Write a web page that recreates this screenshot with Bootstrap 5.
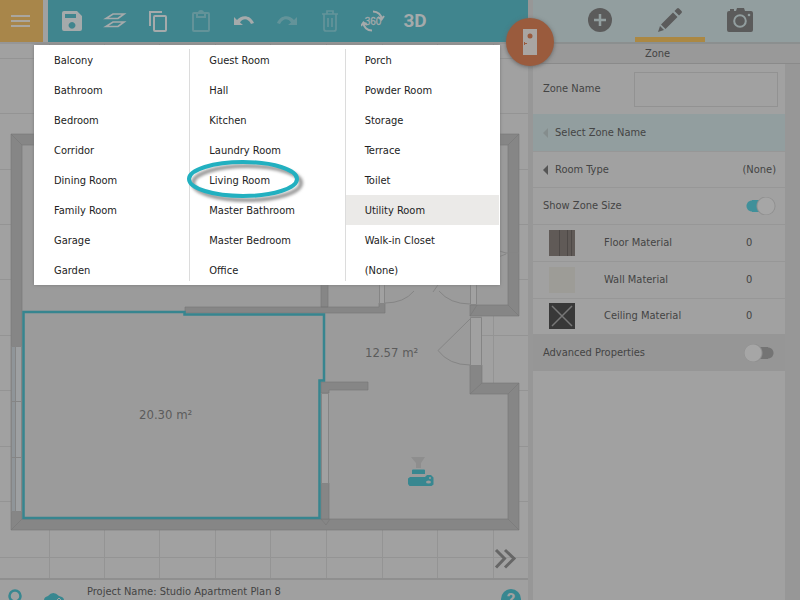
<!DOCTYPE html>
<html lang="en">
<head>
<meta charset="utf-8">
<meta name="viewport" content="width=device-width, initial-scale=1">
<title>Studio Apartment Plan 8</title>
<link href="https://cdn.jsdelivr.net/npm/bootstrap@5.3.0/dist/css/bootstrap.min.css" rel="stylesheet">
<style>
  body { font-family: "DejaVu Sans Condensed", "DejaVu Sans", sans-serif; font-stretch: condensed; font-size: 11px; line-height: 16px; color: #444; background: #a1a1a1; }
  button { font-family: inherit; color: inherit; }
  .plain-btn { border: 0; padding: 0; background: none; }
  .top-strip { height: 42px; }
  .menu-btn { width: 43px; background: #a8864a; }
  .menu-btn svg { margin-right: 3px; }
  .toolbar { background: #40858e; margin-left: 5px; padding-left: 2px; }
  .tool { width: 43px; flex: 0 1 43px; }
  .tool.faded { opacity: .3; }
  .workspace { flex: 0 0 66%; background: #a1a1a1; }
  .plan-area { border-top: 2px solid #969696; border-bottom: 2px solid #8f8f8f; min-height: 0; }
  .status { height: 20px; background: #a0a0a0; }
  .props { border-left: 5px solid #979797; background: #a1a1a1; }
  .tabs { background: #929e9f; border-bottom: 2px solid #8b8f8f; height: 44px; padding-left: 32px; padding-right: 22px; }
  .tab-btn { width: 70px; padding-top: 3px; border-bottom: 5px solid transparent; }
  .tab-btn.current { border-bottom-color: #ab8843; }
  .props-title { height: 20px; padding-top: 2px; background: #999; border-bottom: 1px solid #8a8a8a; padding-right: 18px; }
  .props-list { padding-right: 15px; background: #979797; }
  .props-rows { background: #a1a1a1; }
  .prop-group { height: 257px; }
  .prop { padding: 0 9px 0 10px; border-top: 1px solid #979797; }
  .prop.tall { height: 50px; border-top: 0; padding-right: 7px; }
  .prop.lit { background: #929e9f; border-color: #929e9f; }
  .prop.dark { background: #969696; border-color: #969696; }
  .zone-input { width: 144px; height: 35px; background: #a1a1a1; border: 1px solid #929292; }
  .arrow { width: 12px; }
  .swatch-cell { width: 61px; padding-left: 6px; }
  .count { width: 30px; }
  .toggle { appearance: none; width: 32px; height: 18px; margin: 0; background: radial-gradient(circle at 22px 9px, #a6a6a6 8px, #8f8f8f 9px, transparent 10px), radial-gradient(circle at 8px 9px, #40909a 5px, transparent 6px), linear-gradient(#40909a, #40909a) 8px 3px / 14px 12px no-repeat; border-radius: 9px; }
  .toggle:not(:checked) { background: radial-gradient(circle at 9px 9px, #a6a6a6 8px, #8f8f8f 9px, transparent 10px), radial-gradient(circle at 24px 9px, #747474 5px, transparent 6px), linear-gradient(#747474, #747474) 9px 3px / 15px 12px no-repeat; }
  .room-menu { top: 45px; left: 34px; width: 466px; background: #fff; color: #222; box-shadow: 0 0 3px #777; z-index: 2; }
  .room-col { position: relative; }
  .room-col + .room-col::before { content: ""; position: absolute; left: 0; top: 4px; bottom: 4px; border-left: 1px solid #dcdcdc; }
  .room-item { height: 30px; padding: 2px 0 0 20px; }
  .room-item.hovered { background: #ebeae8; margin-right: 1px; }
  .callout { left: 150px; top: 111px; pointer-events: none; }
  .room-badge { left: 506px; top: 18px; width: 48px; height: 48px; background: #9a5b3d; box-shadow: 0 1px 4px #666; z-index: 3; }
</style>
<script src="https://cdn.jsdelivr.net/npm/bootstrap@5.3.0/dist/js/bootstrap.bundle.min.js"></script>
</head>
<body>
<div class="d-flex vh-100 position-relative overflow-hidden">
  <main class="workspace d-flex flex-column">
    <div class="top-strip d-flex flex-shrink-0">
      <button class="plain-btn menu-btn" aria-label="Menu">
        <svg width="22" height="16" viewBox="0 0 22 16" stroke="#aaa69f" stroke-width="2.2"><path d="M2 3h19M2 8h19M2 13h19"/></svg>
      </button>
      <div class="toolbar d-flex flex-grow-1">
        <button class="plain-btn tool" aria-label="Save"><svg width="22" height="22" viewBox="0 0 22 22"><path fill="#a5aaab" fill-rule="evenodd" d="M3 1h13l5 5v13a2 2 0 0 1-2 2H3a2 2 0 0 1-2-2V3a2 2 0 0 1 2-2zM4 4v4h11V4zM11 12a3.4 3.4 0 1 0 .01 0z"/></svg></button>
        <button class="plain-btn tool" aria-label="Levels"><svg width="24" height="20" viewBox="0 0 24 20" fill="none" stroke="#a5aaab" stroke-width="1.7"><path d="M3 7.500 10 3h11l-6 4.500zM3 15.500 10 11h11l-6 4.500z"/></svg></button>
        <button class="plain-btn tool" aria-label="Copy"><svg width="22" height="24" viewBox="0 0 22 24" fill="none" stroke="#a5aaab" stroke-width="2"><path d="M3 17V3h12"/><rect x="7" y="7" width="12" height="15" rx="1"/></svg></button>
        <button class="plain-btn tool faded" aria-label="Paste"><svg width="20" height="24" viewBox="0 0 20 24" fill="none" stroke="#b5b5b5" stroke-width="2"><rect x="2" y="4" width="16" height="18" rx="1"/><path d="M6 4h8v4H6zM8 4a2 2 0 0 1 4 0"/></svg></button>
        <button class="plain-btn tool" aria-label="Undo"><svg width="24" height="16" viewBox="0 0 24 16"><path fill="#a5aaab" d="M2 4l3 3C9 2 18 1 22 10l-3 1C16 5 11 5 8 9.500l3 2.500H2z"/></svg></button>
        <button class="plain-btn tool faded" aria-label="Redo"><svg width="24" height="16" viewBox="0 0 24 16"><path fill="#b5b5b5" d="M22 4l-3 3C15 2 6 1 2 10l3 1C8 5 13 5 16 9.500L13 12h9z"/></svg></button>
        <button class="plain-btn tool faded" aria-label="Delete"><svg width="20" height="24" viewBox="0 0 20 24" fill="none" stroke="#b5b5b5" stroke-width="1.700"><path d="M2 5h16M7 5V2h6v3M4 5v15a2 2 0 0 0 2 2h8a2 2 0 0 0 2-2V5M8 9v9M12 9v9"/></svg></button>
        <button class="plain-btn tool" aria-label="Rotate view"><svg width="24" height="24" viewBox="0 0 24 24" fill="none" stroke="#a5aaab" stroke-width="2"><path d="M12 2.500c5 0 8.500 3.500 8.500 7.500M23 7l-2.500 3.500L17 8M11 21.500c-5 0-8.500-3.500-8.500-7.500M0 17l2.500-3.500L6 16"/><text x="12" y="16" text-anchor="middle" font-family="Liberation Sans, sans-serif" font-size="10" fill="#a5aaab" stroke="#a5aaab" stroke-width=".3">360</text></svg></button>
        <button class="plain-btn tool" aria-label="3D view"><svg width="26" height="22" viewBox="0 0 26 22"><text x="12" y="17" text-anchor="middle" font-family="Roboto, sans-serif" font-size="19" font-weight="700" fill="#a5aaab">3D</text></svg></button>
      </div>
    </div>
    <div class="plan-area flex-grow-1">
      <svg class="d-block w-100 h-100" viewBox="0 44 528 534" preserveAspectRatio="xMinYMin slice" role="img" aria-label="Floor plan">
        <path stroke="#949494" fill="none" d="M0 58.500h528M0 113.500h528M0 169.500h528M0 224.500h528M0 279.500h528M0 335.500h528M0 390.500h528M0 446.500h528M0 501.500h528M0 557.500h528M49.500 44v536M104.500 44v536M159.500 44v536M215.500 44v536M270.500 44v536M326.500 44v536M382.500 44v536M437.500 44v536M493.500 44v536"/>
        <path fill="#9b9b9b" d="M11 134H519V316H482V383H519V530H11z"/>
        <g fill="#868686" stroke="#777" stroke-width=".6">
          <path fill-rule="evenodd" d="M11 134H519V316H470V305H508V145H22V519H508V394H470V365H482V383H519V530H11z"/>
          <path d="M185 307H379V303H385V313H185zM321 280h7v27h-7zM321 382h47v8h-39v3h-8zM321 483h8v36h-8z"/>
          <path fill="none" d="M11 134l11 11M519 134l-11 11M11 530l11-11M519 530l-11-11M519 316l-11-11M470 316l7-11M519 383l-11 11M470 394l12-11M321 519l5 6 4-6"/>
        </g>
        <g fill="#a1a1a1" stroke="#858585">
          <path d="M321.500 393.500h7v90h-7zM470.500 317.500h11v48h-11zM379.500 280.500h5v23h-5zM470.500 280.500h6v24h-6z"/>
          <path fill="#8f9599" d="M11.500 346.500h4v165h-4z"/><path fill="#9da0a2" d="M15.500 346.500h6v165h-6zM11 401.500h11M11 457.500h11"/>
        </g>
        <g fill="none" stroke="#858585"><path d="M385 303Q404 303 414 291M433 292l7-10M439 291Q450 304 470 304M470 319l-32 31.500Q449 365 470 365M496 250l10 3h13M496 258l10-4"/></g>
        <path fill="#9b9b9b" stroke="#37858f" stroke-width="2.500" d="M23.500 312H184.500V314.500H324V380.500H319.500V518H23.500z"/>
        <g fill="#5b5b5b" font-size="13"><text x="139" y="419">20.30 m²</text><text x="365" y="357">12.57 m²</text></g>
        <path fill="#8e8e8e" d="M411 457h14l-4 6v5h-5v-5z"/>
        <path fill="#388790" fill-rule="evenodd" d="M413 469.500h11a1 1 0 0 1 1 1v3.500h-13v-3.500a1 1 0 0 1 1-1zM410 477h15l2-2h4l2.500 2.500v7l-2 1.500h-22l-1.500-2v-5.500zM426 482a2.500 1.500 0 1 0 5 0a2.500 1.500 0 1 0-5 0M429 478a1 1 0 1 0 2 0a1 1 0 1 0-2 0"/>
        <path fill="none" stroke="#666" stroke-width="3" d="M496 550l8.500 8.500-8.500 9M505 550l9 8.500-9 9"/>
      </svg>
    </div>
    <footer class="status d-flex flex-shrink-0 overflow-hidden">
      <svg class="flex-shrink-0" width="87" height="20" viewBox="0 0 87 20"><circle cx="15" cy="16" r="5.500" fill="none" stroke="#388790" stroke-width="2.500"/><path fill="#388790" d="M44 20q0-3 4-4q5-6 11 0q5 1 5 4z"/><path fill="none" stroke="#a1a1a1" d="M57 20l2-2 2 2"/></svg>
      <span class="flex-grow-1 pt-1">Project Name: Studio Apartment Plan 8</span>
      <button class="plain-btn flex-shrink-0 me-1" aria-label="Help"><svg class="d-block" width="26" height="20" viewBox="0 0 26 20"><circle cx="13" cy="19" r="10" fill="#388790"/><text x="13" y="25" text-anchor="middle" font-family="Roboto, sans-serif" font-size="17" font-weight="700" fill="#a1a1a1">?</text></svg></button>
    </footer>
  </main>

  <aside class="props flex-grow-1 d-flex flex-column">
    <div class="tabs d-flex flex-shrink-0">
      <button class="plain-btn tab-btn" aria-label="Add"><svg width="24" height="24" viewBox="0 0 24 24"><circle cx="12" cy="12" r="12" fill="#5b5b5b"/><path stroke="#929e9f" stroke-width="2.500" d="M12 6v12M6 12h12"/></svg></button>
      <button class="plain-btn tab-btn current" aria-label="Edit"><svg width="26" height="26" viewBox="0 0 26 26" fill="#5b5b5b"><path d="M1 25l2-6 4 4zM4 17.500L16 5.500l4.500 4.500-12 12zM17.500 4l2.500-2.500q1-1 2 0L24.500 4q1 1 0 2L22 8.500z"/></svg></button>
      <button class="plain-btn tab-btn" aria-label="Camera"><svg width="28" height="24" viewBox="0 0 28 24"><path fill="#5b5b5b" d="M3 3h1V1h4v2h2l1-3h7l1 3h6a2 2 0 0 1 2 2v17a2 2 0 0 1-2 2H3a2 2 0 0 1-2-2V5a2 2 0 0 1 2-2z"/><circle cx="14" cy="13" r="5.800" fill="none" stroke="#929e9f" stroke-width="2"/><circle cx="23" cy="7" r="1.300" fill="#929e9f"/></svg></button>
    </div>
    <div class="props-title text-center flex-shrink-0">Zone</div>
    <div class="props-list flex-grow-1 d-flex flex-column">
      <div class="props-rows flex-grow-1">
        <div class="prop tall d-flex align-items-center justify-content-between"><label for="zoneName">Zone Name</label><input id="zoneName" class="zone-input" type="text"></div>
        <div class="prop-group d-flex flex-column">
          <button class="plain-btn prop lit w-100 col d-flex align-items-center"><svg class="arrow" height="10" viewBox="0 0 12 10"><path d="M5 0v10L0 5z" fill="#858d8d"/></svg>Select Zone Name</button>
          <button class="plain-btn prop w-100 col d-flex align-items-center"><svg class="arrow" height="10" viewBox="0 0 12 10"><path d="M5 0v10L0 5z" fill="#555"/></svg>Room Type<span class="ms-auto">(None)</span></button>
          <div class="prop col d-flex align-items-center justify-content-between"><label for="showSize">Show Zone Size</label><input id="showSize" class="toggle" type="checkbox" checked></div>
          <div class="prop col d-flex align-items-center"><span class="swatch-cell"><svg class="d-block" width="26" height="26"><path fill="#605a57" d="M0 0h26v26H0z"/><path stroke="#4e4947" d="M10.500 0v26M18.500 0v26M22.500 0v26"/></svg></span><span>Floor Material</span><span class="count ms-auto">0</span></div>
          <div class="prop col d-flex align-items-center"><span class="swatch-cell"><svg class="d-block" width="26" height="26"><path fill="#9d9c97" d="M0 0h26v26H0z"/></svg></span><span>Wall Material</span><span class="count ms-auto">0</span></div>
          <div class="prop col d-flex align-items-center"><span class="swatch-cell"><svg class="d-block" width="26" height="26"><path fill="#383838" d="M0 0h26v26H0z"/><path stroke="#777" stroke-width="1.500" d="M3 3l20 20M23 3L3 23"/></svg></span><span>Ceiling Material</span><span class="count ms-auto">0</span></div>
          <div class="prop dark col d-flex align-items-center justify-content-between"><label for="advanced">Advanced Properties</label><input id="advanced" class="toggle" type="checkbox"></div>
        </div>
      </div>
    </div>
  </aside>

  <div class="room-menu position-absolute d-flex">
    <div class="room-col col-4 d-flex flex-column">
      <button class="plain-btn room-item text-start">Balcony</button>
      <button class="plain-btn room-item text-start">Bathroom</button>
      <button class="plain-btn room-item text-start">Bedroom</button>
      <button class="plain-btn room-item text-start">Corridor</button>
      <button class="plain-btn room-item text-start">Dining Room</button>
      <button class="plain-btn room-item text-start">Family Room</button>
      <button class="plain-btn room-item text-start">Garage</button>
      <button class="plain-btn room-item text-start">Garden</button>
    </div>
    <div class="room-col col-4 d-flex flex-column">
      <button class="plain-btn room-item text-start">Guest Room</button>
      <button class="plain-btn room-item text-start">Hall</button>
      <button class="plain-btn room-item text-start">Kitchen</button>
      <button class="plain-btn room-item text-start">Laundry Room</button>
      <button class="plain-btn room-item text-start">Living Room</button>
      <button class="plain-btn room-item text-start">Master Bathroom</button>
      <button class="plain-btn room-item text-start">Master Bedroom</button>
      <button class="plain-btn room-item text-start">Office</button>
    </div>
    <div class="room-col col-4 d-flex flex-column">
      <button class="plain-btn room-item text-start">Porch</button>
      <button class="plain-btn room-item text-start">Powder Room</button>
      <button class="plain-btn room-item text-start">Storage</button>
      <button class="plain-btn room-item text-start">Terrace</button>
      <button class="plain-btn room-item text-start">Toilet</button>
      <button class="plain-btn room-item hovered text-start">Utility Room</button>
      <button class="plain-btn room-item text-start">Walk-in Closet</button>
      <button class="plain-btn room-item text-start">(None)</button>
    </div>
    <svg class="callout position-absolute" width="126" height="52" viewBox="0 0 126 52" fill="none"><defs><filter id="soft"><feGaussianBlur stdDeviation="1.500"/></filter></defs><ellipse cx="63" cy="27" rx="54" ry="17" stroke="#999" stroke-width="4" filter="url(#soft)"/><ellipse cx="59" cy="23" rx="54" ry="17" stroke="#22b0c0" stroke-width="4"/></svg>
  </div>
  <button class="plain-btn room-badge position-absolute rounded-circle" aria-label="Rooms"><svg width="16" height="28" viewBox="0 0 16 28"><path fill="#a9a5a2" d="M1 1h14v26H1z"/><circle cx="8" cy="8" r="2.500" fill="#9a5b3d"/><path stroke="#9a5b3d" d="M2 15.500h3M2.500 14v3"/></svg></button>
</div>
</body>
</html>
